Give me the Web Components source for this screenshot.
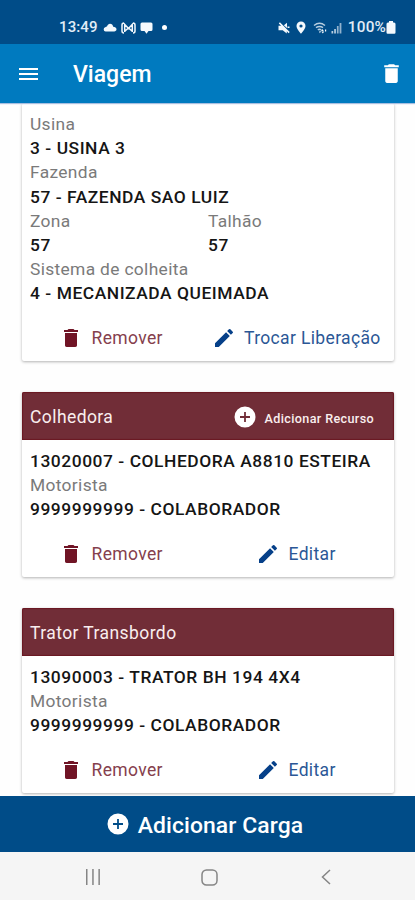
<!DOCTYPE html>
<html lang="pt-BR">
<head>
<meta charset="utf-8">
<meta name="viewport" content="width=device-width">
<title>Viagem</title>
<style>
html,body{margin:0;height:100%;background:#fefefe;overflow:hidden}
body{font-family:Roboto,"Noto Sans",sans-serif}
</style>
</head>
<body>
<trip-app></trip-app>
<script>
const define = (name, html) => {
  const t = document.createElement('template');
  t.innerHTML = html;
  customElements.define(name, class extends HTMLElement {
    constructor() {
      super();
      this.attachShadow({ mode: 'open' }).append(t.content.cloneNode(true));
    }
  });
};

// Icons: viewBox and drawing, filled with the current colour
const ICONS = {
  trash: ['0 0 24 24', '<path d="M6 19.300c0 1.100.6 1.700 1.700 1.700h8.600c1.100 0 1.700-.6 1.700-1.700V7H6v12.300zM19 4h-3.500l-1-1h-5l-1 1H5v2h14V4z"/>'],
  pencil: ['0 0 24 24', '<path d="M3 17.250V21h3.750L17.810 9.940l-3.750-3.750L3 17.250zM20.710 7.040a1 1 0 0 0 0-1.410l-2.340-2.340a1 1 0 0 0-1.410 0l-1.830 1.830 3.750 3.750 1.830-1.830z"/>'],
  menu: ['0 0 19 14', '<path d="M0 1h19v2H0zM0 6h19v2H0zM0 11h19v2H0z"/>'],
  plus: ['0 0 22 22', '<path fill-rule="evenodd" d="M11 .5a10.500 10.500 0 1 0 0 21 10.500 10.500 0 0 0 0-21zM10.100 6h1.800v4.100H16v1.800h-4.100V16h-1.800v-4.100H6v-1.800h4.100z"/>'],
  cloud: ['0 0 14 9', '<path d="M2.600 8.500a2.200 2.200 0 0 1-.3-4.300C2.900 3.600 3.700 3.500 4 3.600 4.600 1.700 5.700.8 7 .8c1.700 0 2.900 1.100 3.200 2.900 1.800 0 3.300 1 3.300 2.600 0 1.300-1 2.200-2.300 2.200z"/>'],
  cast: ['0 0 15 12', '<g fill="none" stroke="currentColor" stroke-width="1.500"><path d="M3 1Q1 1 1 3v6q0 2 2 2M12 1q2 0 2 2v6q0 2-2 2M3.700 10V2.500l3.800 4 3.800-4V10M4 9l3.500-3L11 9"/></g>'],
  chat: ['0 0 13 12', '<path d="M2 .5h9Q12.500.5 12.500 2v5.500Q12.500 9 11 9H8.500l-2 2.700L4.500 9H2Q.5 9 .5 7.500V2Q.5.5 2 .5z"/>'],
  mute: ['0 0 12 12', '<path d="M.5 3.800h2.700L.8 1.400 1.900.3l9.800 9.800-1.100 1.100-1.800-1.900v2.200L4.700 8.300H.5zM9 .8v5.300L5.900 3.300z"/><path d="M9.500 4.500h2v1.500h-2z"/>'],
  pin: ['0 0 10 13', '<path fill-rule="evenodd" d="M5 .5a4.500 4.500 0 0 0-4.500 4.500C.5 8 5 12.700 5 12.700S9.500 8 9.500 5A4.500 4.500 0 0 0 5 .5zm0 2.900a1.600 1.600 0 1 1 0 3.200 1.600 1.600 0 0 1 0-3.200z"/>'],
  wifi: ['0 0 14 12', '<g fill="none" stroke="currentColor" stroke-width="1.500" opacity=".75"><path d="M1 3.500Q6.500-.8 12 3.500M3 5.700q3.500-2.600 7 0M4.800 7.800q1.700-1.100 3.400 0"/></g><path d="M6.500 8.500l1.500 1.300-1.500 1.500zM9.300 7l1.500 2H8zM9.800 11.500l-1.500-2h3zM12 7.500h1.200v2H12z"/>'],
  signal: ['0 0 11 12', '<path opacity=".75" d="M.5 9h1.700v2.500H.5zM3.200 7h1.700v4.500H3.200z"/><path opacity=".6" d="M5.900 4h1.700v7.500H5.900zM8.600 1h1.800v10.500H8.600z"/>'],
  battery: ['0 0 10 13', '<path d="M3 0h4v1.500h1Q9.500 1.500 9.500 3v8.500q0 1.200-1.200 1.200H1.700Q.5 12.700.5 11.500V3Q.5 1.500 2 1.500h1z"/>'],
  recents: ['0 0 16 16', '<path d="M1 0h1.500v16H1zM7.200 0h1.500v16H7.200zM13.400 0h1.500v16h-1.500z"/>'],
  home: ['0 0 17 17', '<rect x="1" y="1" width="15" height="15" rx="4.500" fill="none" stroke="currentColor" stroke-width="1.500"/>'],
  back: ['0 0 10 16', '<path d="M9 1L1.500 8 9 15" fill="none" stroke="currentColor" stroke-width="1.500"/>']
};
customElements.define('ui-icon', class extends HTMLElement {
  connectedCallback() {
    const [box, body] = ICONS[this.getAttribute('name')];
    const [, , w, h] = box.split(' ').map(Number);
    const width = Number(this.getAttribute('size')) || w;
    this.attachShadow({ mode: 'open' }).innerHTML =
      `<style>:host{display:block;flex:none}svg{display:block;fill:currentColor}</style>
       <svg viewBox="${box}" width="${width}" height="${width * h / w}">${body}</svg>`;
  }
});

define('status-bar', `
<style>
:host{display:flex;justify-content:space-between;height:44px;background:#004c88;color:#e2edf7;padding:11px 19px 0 59px;box-sizing:border-box;font-size:15px;font-weight:500;line-height:33px}
div{display:flex;align-items:center;height:33px}
.time{width:38px;letter-spacing:.1px;margin-right:5.500px}
.pct{letter-spacing:.2px;font-size:15.300px}
.dot{width:5px;height:5px;border-radius:50%;background:#fff;margin-left:9.500px}
.left ui-icon+ui-icon{margin-left:4px}
ui-icon{color:#f4f9fd}
</style>
<div class="left"><span class="time">13:49</span><ui-icon name="cloud"></ui-icon><ui-icon name="cast"></ui-icon><ui-icon name="chat"></ui-icon><span class="dot"></span></div>
<div><ui-icon name="mute" style="margin-right:6px"></ui-icon><ui-icon name="pin" style="margin-right:7px"></ui-icon><ui-icon name="wifi" style="margin-right:4px"></ui-icon><ui-icon name="signal" style="margin-right:6px"></ui-icon><span class="pct">100%</span><ui-icon name="battery"></ui-icon></div>`);

define('app-bar', `
<style>
:host{display:flex;align-items:center;height:59px;background:#007abf;color:#fff;padding:0 11px 0 19px;box-sizing:border-box;position:relative;z-index:1;box-shadow:0 1px 1px #a9bfe0}
.title{flex:1;margin-left:35px;font-size:23px;font-weight:500;padding-top:2px}
</style>
<ui-icon name="menu"></ui-icon><span class="title"><slot></slot></span><ui-icon name="trash" size="25"></ui-icon>`);

define('resource-card', `
<style>
:host{display:block;background:#fff;box-shadow:0 1px 3px rgba(0,0,0,.3);border-radius:2px}
.body{padding:9px 8px 0}
</style>
<slot name="head"></slot><div class="body"><slot></slot></div><slot name="actions"></slot>`);

define('card-head', `
<style>
:host{display:flex;align-items:center;justify-content:space-between;height:48px;background:#712d37;color:#f9eeee;padding:1px 20px 0 8px;box-sizing:border-box;font-size:17.500px;letter-spacing:.42px;border-radius:2px 2px 0 0;box-shadow:inset 0 0 1px 1px #6b1822}
</style><slot></slot>`);

define('add-resource', `
<style>
:host{display:flex;align-items:center;gap:9px;font-size:12.600px;font-weight:500;letter-spacing:.36px}
span{padding-top:3px}ui-icon{color:#fff}
</style><ui-icon name="plus" size="22"></ui-icon><span><slot></slot></span>`);

define('data-field', `
<style>
:host{display:block;font-size:17.400px;line-height:24.170px;white-space:nowrap}
.label{color:#7a7a7a;letter-spacing:.33px}
.value{color:#151515;font-weight:500;letter-spacing:.55px}
</style><div class="label"><slot name="label"></slot></div><div class="value"><slot></slot></div>`);

define('field-row', `<style>:host{display:grid;grid-template-columns:178px 1fr}</style><slot></slot>`);

define('card-actions', `
<style>:host{display:grid;grid-template-columns:1fr 1fr;height:47px;padding:9px 0 0;align-items:center}</style><slot></slot>`);

define('action-button', `
<style>
:host{display:flex;align-items:center;font-size:17.500px;letter-spacing:.35px;white-space:nowrap}
:host([kind=remove]){color:#85404d}
:host([kind=edit]){color:#2b5796}
:host([kind=remove]) ::slotted(ui-icon){color:#701425}
:host([kind=edit]) ::slotted(ui-icon){color:#064089}
span{margin-left:8.500px}
</style><slot name="icon"></slot><span><slot></slot></span>`);

define('add-load', `
<style>
:host{display:flex;align-items:center;justify-content:center;gap:9px;height:56px;background:#004c88;color:#fff;font-size:22.900px;font-weight:500;letter-spacing:.1px;padding-right:5px;box-sizing:border-box;position:relative;z-index:1}
span{padding-top:2px}
</style><ui-icon name="plus" size="22"></ui-icon><span><slot></slot></span>`);

define('nav-bar', `
<style>
:host{display:grid;grid-template-columns:1fr 1fr 1fr;height:48px;background:#f5f5f5;color:#858585;align-items:center;justify-items:center;padding:2px 31px 0 35px;box-sizing:border-box}
</style><ui-icon name="recents"></ui-icon><ui-icon name="home"></ui-icon><ui-icon name="back"></ui-icon>`);

define('trip-app', `
<style>
:host{display:flex;flex-direction:column;width:415px;height:900px;overflow:hidden}
main{flex:1;min-height:0;overflow:hidden;padding:0 21px 0 22px;display:flex;flex-direction:column}
resource-card{flex:none;height:185px;margin-top:31px;width:372px}
resource-card.first{margin-top:0;height:258px}
action-button[kind=remove]{padding-left:37px}
action-button[kind=edit]{padding-left:48px}
action-button.wide{padding-left:3.500px}
.value-only{display:block;font-size:17.400px;font-weight:500;letter-spacing:.55px;line-height:24.170px;color:#151515;white-space:nowrap}
</style>
<status-bar></status-bar>
<app-bar>Viagem</app-bar>
<main>
<resource-card class="first">
<data-field><span slot="label">Usina</span>3 - USINA 3</data-field>
<data-field><span slot="label">Fazenda</span>57 - FAZENDA SAO LUIZ</data-field>
<field-row><data-field><span slot="label">Zona</span>57</data-field><data-field><span slot="label">Talhão</span>57</data-field></field-row>
<data-field><span slot="label">Sistema de colheita</span>4 - MECANIZADA QUEIMADA</data-field>
<card-actions slot="actions"><action-button kind="remove"><ui-icon slot="icon" name="trash" size="24"></ui-icon>Remover</action-button><action-button class="wide" kind="edit"><ui-icon slot="icon" name="pencil" size="24"></ui-icon>Trocar Liberação</action-button></card-actions>
</resource-card>
<resource-card>
<card-head slot="head"><span>Colhedora</span><add-resource>Adicionar Recurso</add-resource></card-head>
<span class="value-only">13020007 - COLHEDORA A8810 ESTEIRA</span>
<data-field><span slot="label">Motorista</span>9999999999 - COLABORADOR</data-field>
<card-actions slot="actions"><action-button kind="remove"><ui-icon slot="icon" name="trash" size="24"></ui-icon>Remover</action-button><action-button kind="edit"><ui-icon slot="icon" name="pencil" size="24"></ui-icon>Editar</action-button></card-actions>
</resource-card>
<resource-card>
<card-head slot="head"><span>Trator Transbordo</span></card-head>
<span class="value-only">13090003 - TRATOR BH 194 4X4</span>
<data-field><span slot="label">Motorista</span>9999999999 - COLABORADOR</data-field>
<card-actions slot="actions"><action-button kind="remove"><ui-icon slot="icon" name="trash" size="24"></ui-icon>Remover</action-button><action-button kind="edit"><ui-icon slot="icon" name="pencil" size="24"></ui-icon>Editar</action-button></card-actions>
</resource-card>
</main>
<add-load>Adicionar Carga</add-load>
<nav-bar></nav-bar>`);
</script>
</body>
</html>
